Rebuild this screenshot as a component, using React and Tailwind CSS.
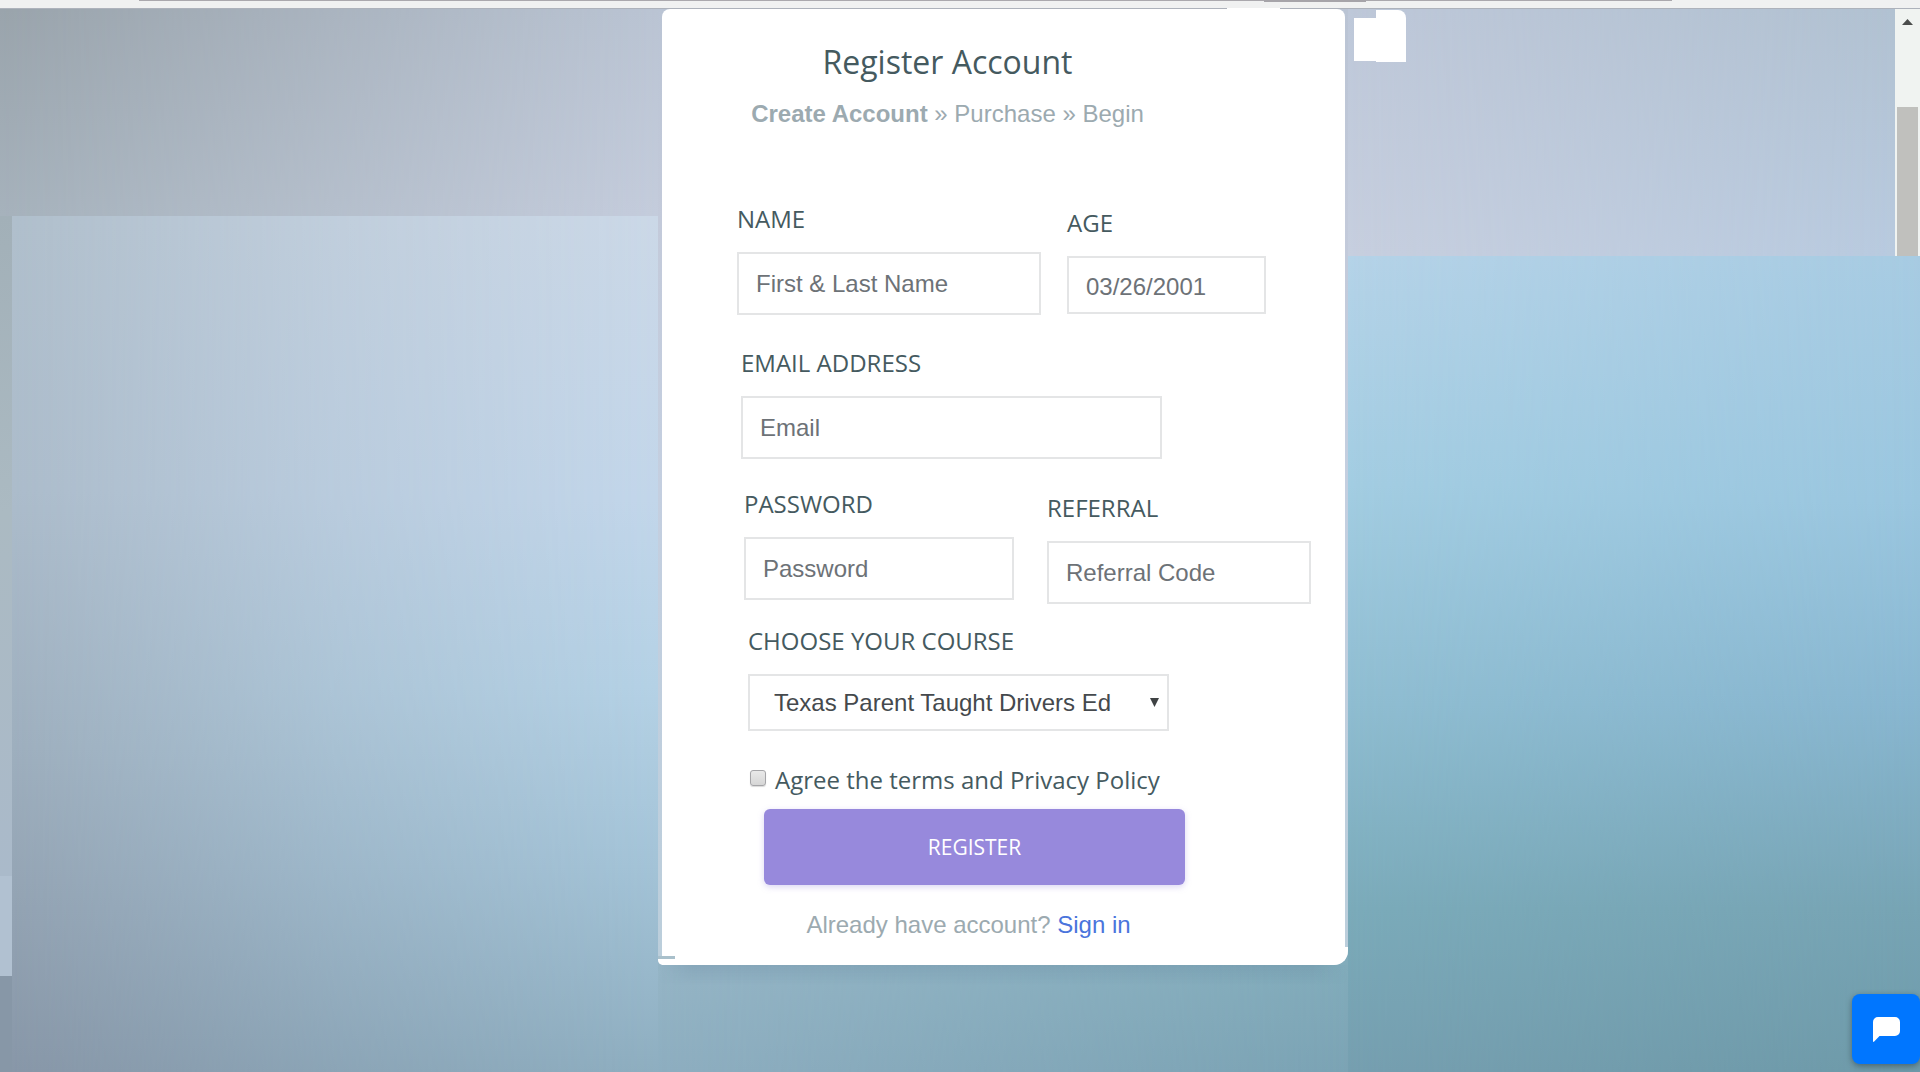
import React, { useState } from 'react';

const inputClass =
  "w-full border-2 border-[#e4e5e6] bg-white px-[17px] text-[24px] leading-[32px] text-[#6d7277] placeholder:text-[#6d7277] placeholder:opacity-100 outline-none focus:border-[#988adc] font-['Liberation_Sans',Arial,sans-serif]";

const labelClass = 'block mb-[17px] text-[24px] leading-[32px] uppercase text-[#455a5f]';

const Field = ({ id, label, className = '', size = 'h-[63px]', ...rest }) => (
  <div className={className}>
    <label htmlFor={id} className={labelClass}>{label}</label>
    <input id={id} name={id} className={`${inputClass} ${size}`} {...rest} />
  </div>
);

const RegisterForm = () => {
  const [form, setForm] = useState({ name: '', age: '03/26/2001', email: '', password: '', referral: '', course: 'parent', agree: false });

  const handleChange = (e) => {
    const { name, value, type, checked } = e.target;
    setForm({ ...form, [name]: type === 'checkbox' ? checked : value });
  };

  return (
    <form onSubmit={(e) => e.preventDefault()} className="text-[#455a5f]">
      {/* Name + Age */}
      <div className="flex items-start gap-[26px] pl-[75px]">
        <Field id="name" label="Name" className="w-[304px]" type="text" placeholder="First & Last Name" value={form.name} onChange={handleChange} />
        <Field id="age" label="Age" className="w-[199px] mt-1" size="h-[58px] pt-1" type="text" value={form.age} onChange={handleChange} />
      </div>

      {/* Email */}
      <div className="mt-[32px] pl-[79px]">
        <Field id="email" label="Email Address" className="w-[421px]" type="email" placeholder="Email" value={form.email} onChange={handleChange} />
      </div>

      {/* Password + Referral */}
      <div className="flex items-start gap-[33px] mt-[29px] pl-[82px]">
        <Field id="password" label="Password" className="w-[270px]" type="password" placeholder="Password" value={form.password} onChange={handleChange} />
        <Field id="referral" label="Referral" className="w-[264px] mt-1" type="text" placeholder="Referral Code" value={form.referral} onChange={handleChange} />
      </div>

      {/* Course */}
      <div className="mt-[21px] pl-[86px]">
        <label htmlFor="course" className={labelClass}>Choose your course</label>
        <div className="relative w-[421px]">
          <select id="course" name="course" value={form.course} onChange={handleChange}
            className="appearance-none w-full h-[57px] border-2 border-[#e4e5e6] bg-white pl-6 pr-10 text-[24px] text-[#45494d] outline-none font-['Liberation_Sans',Arial,sans-serif]">
            <option value="parent">Texas Parent Taught Drivers Ed</option>
          </select>
          <svg className="absolute right-2.5 top-6 w-[9px] h-[9px] pointer-events-none" viewBox="0 0 9 9" fill="#3f4244">
            <path d="M0 0h9L4.5 9z" />
          </svg>
        </div>
      </div>

      {/* Terms */}
      <div className="flex items-start gap-[9px] mt-[33px] pl-[88px]">
        <input id="agree" name="agree" type="checkbox" checked={form.agree} onChange={handleChange}
          className="appearance-none w-4 h-4 mt-1.5 shrink-0 rounded-[3px] border border-[#a5a5a8] bg-linear-to-b from-[#e9e9e9] to-[#d6d6d6] shadow-[0_1px_1px_rgba(0,0,0,0.15)] checked:from-[#988adc] checked:to-[#988adc]" />
        <label htmlFor="agree" className="text-[24px] leading-[32px]">Agree the terms and Privacy Policy</label>
      </div>

      <div className="mt-[13px] pl-[102px]">
        <button type="submit"
          className="w-[421px] h-[76px] pt-0.5 rounded-[6px] bg-[#9789dc] hover:bg-[#8577d0] text-white text-[21px] font-medium uppercase cursor-pointer shadow-[0_2px_6px_rgba(151,137,220,0.35)]">
          Register
        </button>
      </div>

      <p className="mt-[24px] pr-[70px] text-center text-[24px] leading-[32px] text-[#9caab0] font-['Liberation_Sans',Arial,sans-serif]">
        Already have account? <a href="#signin" className="text-[#4a74dc] hover:underline">Sign in</a>
      </p>
    </form>
  );
};

// fake browser scrollbar at the right edge
const Scrollbar = () => (
  <div className="w-[25px] shrink-0 flex flex-col bg-[#f0f3f1]">
    <svg className="w-[11px] h-[6px] mt-2.5 mx-auto" viewBox="0 0 11 6" fill="#4b4d4c">
      <path d="M5.5 0L11 6H0z" />
    </svg>
    <div className="mt-[82px] mx-[2px] flex-1 bg-[#c0c0bd]" />
  </div>
);

const App = () => (
  <div className="min-h-screen flex flex-col overflow-hidden font-['Open_Sans',sans-serif]">
    {/* ── Browser edge ── */}
    <div className="h-[9px] flex items-start bg-[#f0f1f1] border-b border-[#adb2bb]">
      <div className="w-[139px]" />
      <div className="flex-1 h-px bg-[#aaa8ad]" />
      <div className="w-[102px] h-[2px] bg-[#a6a4a9]" />
      <div className="w-[306px] h-px bg-[#aaa8ad]" />
      <div className="w-[248px]" />
    </div>

    <div className="flex-1 grid grid-cols-[minmax(0,658fr)_690px_minmax(0,572fr)]">
      {/* ── Left background ── */}
      <div className="flex flex-col">
        <div className="relative h-[207px] bg-[linear-gradient(180deg,#9aa4ac,#a6b2bc)]">
          <div className="absolute inset-0 bg-[linear-gradient(180deg,#bac4d3,#c4ccdc)] mask-[linear-gradient(90deg,transparent,black)]" />
        </div>
        <div className="flex-1 flex">
          <div className="w-3 flex flex-col bg-[#8797a7]">
            <div className="h-[660px] bg-[linear-gradient(180deg,#a2b0b8,#abbac2_45%,#aabaca)]" />
            <div className="h-[100px] bg-[#b1c1d1]" />
          </div>
          <div className="relative flex-1 bg-[linear-gradient(180deg,#b0bfcc,#acbccb_32%,#9eafbe_62%,#8897a8)]">
            <div className="absolute inset-0 bg-[linear-gradient(180deg,#cbd8e7,#c2d6ea_33%,#b4d1e5_55%,#a3c3d7_76%,#8eaec0)] mask-[linear-gradient(90deg,transparent,rgba(0,0,0,0.6)_50%,black)]" />
          </div>
        </div>
      </div>

      {/* ── Register card ── */}
      <div className="relative flex flex-col bg-[linear-gradient(90deg,#95b5c6,#82acbb)]">
        <div className="relative pl-1 pr-[3px] rounded-bl-[5px] rounded-br-[14px] overflow-hidden bg-[linear-gradient(180deg,#bac4d4,#c3cada_22%,#c4cfe0_50%,#bbcedb)]">
          <div className="bg-white rounded-t-[8px] pt-[33px] pb-6">
            <div className="pr-[112px] text-center mb-[73px]">
              <h1 className="text-[32px] leading-[40px] mb-4 text-[#455a5f]">Register Account</h1>
              <p className="text-[24px] leading-[32px] text-[#9caab0] font-['Liberation_Sans',Arial,sans-serif]">
                <b>Create Account</b> » Purchase » Begin
              </p>
            </div>
            <RegisterForm />
          </div>
          {/* bottom lip of the card */}
          <div className="absolute left-0 bottom-0 w-[17px] h-[9px] bg-white border-t-[3px] border-[#a9c0cb]" />
          <div className="absolute right-0 bottom-0 w-1 h-[18px] bg-white" />
        </div>
        <div className="relative flex-1 bg-[linear-gradient(180deg,#95b5c6,#8eaec0)]">
          <div className="absolute inset-0 bg-[linear-gradient(180deg,#82acbb,#7ba3b4)] mask-[linear-gradient(90deg,transparent,black)]" />
          <div className="absolute inset-x-0 top-0 h-5 bg-[linear-gradient(180deg,rgba(80,110,140,0.18),transparent)] mask-[linear-gradient(90deg,transparent,black_5%,black_95%,transparent)]" />
        </div>
        {/* white break in the top border */}
        <div className="absolute -top-px left-[569px] w-[53px] h-[2px] bg-white" />
      </div>

      {/* ── Right background ── */}
      <div className="flex flex-col">
        <div className="flex h-[247px]">
          <div className="relative flex-1 bg-[linear-gradient(180deg,#bec8d9,#c7cfdf)]">
            <div className="absolute inset-0 bg-[linear-gradient(180deg,#b1c1d1,#b8cadf)] mask-[linear-gradient(90deg,transparent,black)]" />
            <div className="absolute left-[6px] top-[9px] w-[24px] h-[43px] bg-white" />
            <div className="absolute left-[28px] top-px w-[30px] h-[52px] rounded-tr-[8px] bg-white" />
          </div>
          <Scrollbar />
        </div>
        <div className="relative flex-1 bg-[linear-gradient(180deg,#b5d3e8,#a3cde2_28%,#8fbdd1_55%,#7babba_80%,#769fb0)]">
          <div className="absolute inset-0 bg-[linear-gradient(180deg,#a7cbe2,#9ac6df_30%,#88b6d0_55%,#77a4b4_80%,#6e9aa9)] mask-[linear-gradient(90deg,transparent,black)]" />
        </div>
      </div>
    </div>

    {/* ── Chat button ── */}
    <button type="button" aria-label="Open chat"
      className="fixed right-0 bottom-2 w-[68px] h-[70px] flex items-center justify-center rounded-[8px] bg-[#0076ff] shadow-[0_2px_6px_rgba(0,0,0,0.35)] cursor-pointer">
      <svg className="w-[27px] h-[25px]" viewBox="0 0 27 25" fill="#fff">
        <path d="M5 0h17a5 5 0 0 1 5 5v9a5 5 0 0 1-5 5H6.500L1.200 24.600Q0 25.500 0 24V5a5 5 0 0 1 5-5z" />
      </svg>
    </button>
  </div>
);

export default App;
